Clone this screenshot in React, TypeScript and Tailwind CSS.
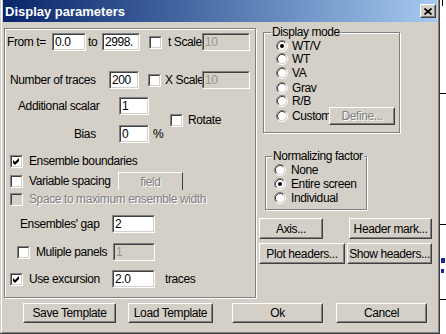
import React from 'react';

type P = { className?: string; children?: React.ReactNode; disabled?: boolean };

function Sunken({ className = '', children, disabled }: P) {
  return (
    <div className={`shrink-0 border border-t-[#808080] border-l-[#808080] border-r-white border-b-white ${className}`}>
      <div
        className={`w-full h-full border border-t-[#404040] border-l-[#404040] border-r-[#d4d0c8] border-b-[#d4d0c8] flex items-center pl-[1px] overflow-hidden whitespace-nowrap ${
          disabled ? 'bg-[#d4d0c8] text-[#9a968e]' : 'bg-white text-black'
        }`}
      >
        {children}
      </div>
    </div>
  );
}

function Check({ checked, disabled }: { checked?: boolean; disabled?: boolean }) {
  return (
    <div className="shrink-0 w-[13px] h-[13px] border border-t-[#808080] border-l-[#808080] border-r-white border-b-white">
      <div
        className={`w-full h-full border border-t-[#404040] border-l-[#404040] border-r-[#d4d0c8] border-b-[#d4d0c8] ${
          disabled ? 'bg-[#d4d0c8]' : 'bg-white'
        }`}
      >
        {checked && (
          <svg width="9" height="9" viewBox="0 0 9 9" className="block">
            <polygon points="1,3 3,5 7,1 7,4 3,8 1,6" fill="#000" />
          </svg>
        )}
      </div>
    </div>
  );
}

function Radio({ checked }: { checked?: boolean }) {
  return (
    <svg width="12" height="12" viewBox="0 0 12 12" className="block shrink-0">
      <circle cx="6" cy="6" r="4.5" fill="#fff" />
      <path d="M2.11 9.89 A5.5 5.5 0 0 1 9.89 2.11" stroke="#808080" fill="none" />
      <path d="M9.89 2.11 A5.5 5.5 0 0 1 2.11 9.89" stroke="#fff" fill="none" />
      <path d="M2.82 9.18 A4.5 4.5 0 0 1 9.18 2.82" stroke="#404040" fill="none" />
      <path d="M9.18 2.82 A4.5 4.5 0 0 1 2.82 9.18" stroke="#d4d0c8" fill="none" />
      {checked && <circle cx="6" cy="6" r="2" fill="#000" />}
    </svg>
  );
}

function Btn({ className = '', children, disabled }: P) {
  return (
    <div className={`shrink-0 border border-t-white border-l-white border-r-[#404040] border-b-[#404040] ${className}`}>
      <div
        className={`w-full h-full border border-t-[#d4d0c8] border-l-[#d4d0c8] border-r-[#808080] border-b-[#808080] flex items-center justify-center whitespace-nowrap overflow-hidden ${
          disabled ? 'text-[#808080] [text-shadow:1px_1px_0_#fff]' : 'text-black'
        }`}
      >
        {children}
      </div>
    </div>
  );
}

function Group({ label, className = '', labelClass = '', children }: { label: string; className?: string; labelClass?: string; children?: React.ReactNode }) {
  return (
    <div className={`shrink-0 border border-[#808080] shadow-[inset_1px_1px_0_#fff,1px_1px_0_#fff] flex flex-col ${className}`}>
      <div className={`-mt-[7px] w-fit px-[1px] bg-[#d4d0c8] h-[13px] leading-[13px] whitespace-nowrap ${labelClass}`}>{label}</div>
      {children}
    </div>
  );
}

export default function App() {
  return (
    <div className="w-[446px] h-[334px] flex bg-white overflow-hidden font-['Liberation_Sans',Arial,sans-serif] text-[12px] leading-none tracking-[-0.4px] text-black">
      {/* dialog */}
      <div className="w-[440px] h-[334px] shrink-0 bg-[#d4d0c8] border-r border-b border-[#404040] pl-[1px] flex">
        <div className="flex-1 h-full border-l border-l-white border-r border-r-[#808080] border-b border-b-[#808080] px-[1px] flex flex-col">
          {/* title bar */}
          <div className="h-[22px] shrink-0 bg-linear-to-r from-[#0a246a] to-[#a6caf0] flex items-center">
            <span className="pl-[2px] text-white font-bold text-[13px] tracking-normal">Display parameters</span>
            <div className="ml-auto mr-[1px] w-[16px] h-[14px] border border-t-white border-l-white border-r-[#404040] border-b-[#404040] bg-[#d4d0c8]">
              <div className="w-full h-full border border-t-[#d4d0c8] border-l-[#d4d0c8] border-r-[#808080] border-b-[#808080] flex items-center justify-center">
                <svg width="8" height="7" viewBox="0 0 8 7" className="block">
                  <path d="M0.5 0.5 L7.5 6.5 M7.5 0.5 L0.5 6.5" stroke="#000" strokeWidth="1.7" fill="none" />
                </svg>
              </div>
            </div>
          </div>

          {/* body */}
          <div className="flex">
            {/* left panel */}
            <div className="ml-[1px] mt-[6px] w-[252px] h-[270px] shrink-0 border border-[#808080] shadow-[inset_1px_1px_0_#fff,1px_1px_0_#fff] flex flex-col">
              {/* row 1 */}
              <div className="mt-[4px] h-[18px] flex items-center">
                <span className="ml-[2px] w-[45px] shrink-0">From t=</span>
                <Sunken className="w-[34px] h-[18px]">0.0</Sunken>
                <span className="ml-[2px] w-[14px] shrink-0">to</span>
                <Sunken className="w-[38px] h-[18px]">2998.</Sunken>
                <div className="ml-[9px]"><Check /></div>
                <span className="ml-[6px] w-[34px] shrink-0 overflow-hidden whitespace-nowrap">t Scale</span>
                <Sunken disabled className="w-[48px] h-[18px]">10</Sunken>
              </div>
              {/* row 2 */}
              <div className="mt-[20px] h-[18px] flex items-center">
                <span className="ml-[5px] w-[99px] shrink-0 whitespace-nowrap">Number of traces</span>
                <Sunken className="w-[30px] h-[18px]">200</Sunken>
                <div className="ml-[9px]"><Check /></div>
                <span className="ml-[4px] w-[37px] shrink-0 overflow-hidden whitespace-nowrap">X Scale</span>
                <Sunken disabled className="w-[48px] h-[18px]">10</Sunken>
              </div>
              {/* rows 3-4 */}
              <div className="mt-[8px] flex items-center">
                <div className="w-[144px] shrink-0 flex flex-col">
                  <div className="h-[18px] flex items-center">
                    <span className="ml-[13px] w-[101px] shrink-0 whitespace-nowrap">Additional scalar</span>
                    <Sunken className="w-[30px] h-[18px]">1</Sunken>
                  </div>
                  <div className="mt-[10px] h-[18px] flex items-center">
                    <span className="ml-[69px] w-[45px] shrink-0">Bias</span>
                    <Sunken className="w-[30px] h-[18px]">0</Sunken>
                    <span className="ml-[4px]">%</span>
                  </div>
                </div>
                <div className="ml-[21px]"><Check /></div>
                <span className="ml-[5px]">Rotate</span>
              </div>
              {/* Ensemble boundaries */}
              <div className="mt-[9px] h-[18px] flex items-center">
                <div className="ml-[5px]"><Check checked /></div>
                <span className="ml-[6px] whitespace-nowrap">Ensemble boundaries</span>
              </div>
              {/* Variable spacing */}
              <div className="mt-[2px] h-[18px] flex items-center">
                <div className="ml-[5px]"><Check /></div>
                <span className="ml-[6px] w-[89px] shrink-0 whitespace-nowrap">Variable spacing</span>
                <div className="w-[65px] h-[18px] shrink-0 border-t border-l border-t-white border-l-white border-r border-r-[#404040] bg-[#d4d0c8] flex items-center justify-center text-[#808080] [text-shadow:1px_1px_0_#fff]">
                  field
                </div>
              </div>
              {/* Space to maximum */}
              <div className="h-[18px] flex items-center">
                <div className="ml-[5px]"><Check disabled /></div>
                <span className="ml-[6px] whitespace-nowrap text-[#808080] [text-shadow:1px_1px_0_#fff]">Space to maximum ensemble width</span>
              </div>
              {/* Ensembles' gap */}
              <div className="mt-[7px] h-[18px] flex items-center">
                <span className="ml-[15px] w-[92px] shrink-0 whitespace-nowrap">Ensembles' gap</span>
                <Sunken className="w-[43px] h-[18px]">2</Sunken>
              </div>
              {/* Muliple panels */}
              <div className="mt-[10px] h-[18px] flex items-center">
                <div className="ml-[12px]"><Check /></div>
                <span className="ml-[6px] w-[77px] shrink-0 overflow-hidden whitespace-nowrap">Muliple panels</span>
                <Sunken disabled className="w-[42px] h-[18px]">1</Sunken>
              </div>
              {/* Use excursion */}
              <div className="mt-[9px] h-[18px] flex items-center">
                <div className="ml-[5px]"><Check checked /></div>
                <span className="ml-[6px] w-[83px] shrink-0 whitespace-nowrap">Use excursion</span>
                <Sunken className="w-[43px] h-[18px]">2.0</Sunken>
                <span className="ml-[10px]">traces</span>
              </div>
            </div>

            {/* right column */}
            <div className="ml-[3px] w-[173px] shrink-0 flex flex-col">
              <Group label="Display mode" labelClass="ml-[7px]" className="mt-[10px] ml-[4px] w-[137px] h-[101px]">
                <div className="h-[13px] flex items-center">
                  <div className="ml-[12px]"><Radio checked /></div>
                  <span className="ml-[4px]">WT/V</span>
                </div>
                <div className="h-[14px] flex items-center">
                  <div className="ml-[12px]"><Radio /></div>
                  <span className="ml-[4px]">WT</span>
                </div>
                <div className="h-[14px] flex items-center">
                  <div className="ml-[12px]"><Radio /></div>
                  <span className="ml-[4px]">VA</span>
                </div>
                <div className="mt-[1px] h-[14px] flex items-center">
                  <div className="ml-[12px]"><Radio /></div>
                  <span className="ml-[4px]">Grav</span>
                </div>
                <div className="h-[12px] flex items-center">
                  <div className="ml-[12px]"><Radio /></div>
                  <span className="ml-[4px]">R/B</span>
                </div>
                <div className="h-[18px] flex items-center">
                  <div className="ml-[12px]"><Radio /></div>
                  <span className="ml-[4px] w-[37px] shrink-0 overflow-hidden whitespace-nowrap">Custom</span>
                  <Btn disabled className="w-[66px] h-[18px]">Define...</Btn>
                </div>
              </Group>

              <Group label="Normalizing factor" labelClass="ml-[6px]" className="mt-[23px] ml-[6px] w-[102px] h-[54px]">
                <div className="h-[14px] flex items-center">
                  <div className="ml-[8px]"><Radio /></div>
                  <span className="ml-[5px]">None</span>
                </div>
                <div className="h-[14px] flex items-center">
                  <div className="ml-[8px]"><Radio checked /></div>
                  <span className="ml-[5px] whitespace-nowrap">Entire screen</span>
                </div>
                <div className="h-[14px] flex items-center">
                  <div className="ml-[8px]"><Radio /></div>
                  <span className="ml-[5px]">Individual</span>
                </div>
              </Group>

              <div className="mt-[8px] h-[21px] flex">
                <Btn className="w-[64px] h-[21px]">Axis...</Btn>
                <Btn className="ml-[26px] w-[83px] h-[21px]">Header mark...</Btn>
              </div>
              <div className="mt-[4px] h-[21px] flex">
                <Btn className="w-[86px] h-[21px]">Plot headers...</Btn>
                <Btn className="ml-[2px] w-[85px] h-[21px]">Show headers...</Btn>
              </div>
            </div>
          </div>

          {/* bottom buttons */}
          <div className="mt-[5px] h-[20px] flex">
            <Btn className="ml-[20px] w-[93px] h-[20px]">Save Template</Btn>
            <Btn className="ml-[12px] w-[85px] h-[20px]">Load Template</Btn>
            <Btn className="ml-[19px] w-[91px] h-[20px]">Ok</Btn>
            <Btn className="ml-[13px] w-[91px] h-[20px]">Cancel</Btn>
          </div>
        </div>
      </div>

      {/* background window strip */}
      <div className="w-[6px] h-[334px] shrink-0 bg-white flex flex-col">
        <div className="ml-[2px] w-[1px] h-[6px] bg-black" />
        <div className="mt-[87px] h-[1px] bg-black" />
        <div className="mt-[130px] h-[1px] bg-black" />
        <div className="mt-[33px] ml-[1px] w-[4px] h-[5px] bg-[#1a2a8a]" />
        <div className="mt-[6px] ml-[1px] w-[3px] h-[4px] bg-[#1a2a8a]" />
        <div className="mt-[26px] h-[1px] bg-black" />
      </div>
    </div>
  );
}
